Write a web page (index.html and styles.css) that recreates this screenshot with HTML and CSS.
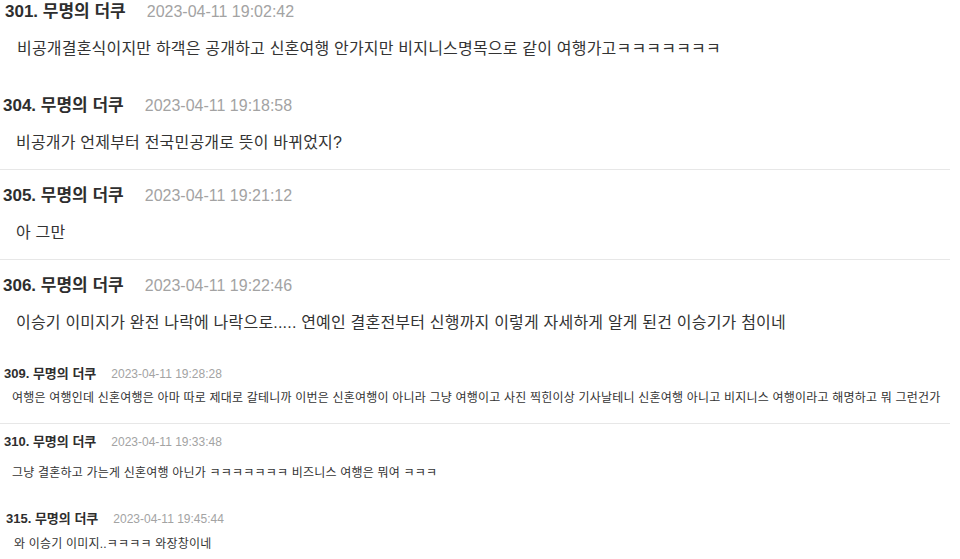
FILE: index.html
```html
<!DOCTYPE html>
<html lang="ko">
<head>
<meta charset="utf-8">
<title>댓글</title>
<link rel="stylesheet" href="styles.css">
</head>
<body>
<div class="page">
  <section class="thread thread-lg">
    <article class="cmt cmt-first">
      <div class="cmt-head"><span class="cmt-name">301. 무명의 더쿠</span><span class="cmt-date">2023-04-11 19:02:42</span></div>
      <p class="cmt-body">비공개결혼식이지만 하객은 공개하고 신혼여행 안가지만 비지니스명목으로 같이 여행가고ㅋㅋㅋㅋㅋㅋㅋ</p>
    </article>
    <article class="cmt cmt-line">
      <div class="cmt-head"><span class="cmt-name">304. 무명의 더쿠</span><span class="cmt-date">2023-04-11 19:18:58</span></div>
      <p class="cmt-body">비공개가 언제부터 전국민공개로 뜻이 바뀌었지?</p>
    </article>
    <article class="cmt cmt-line">
      <div class="cmt-head"><span class="cmt-name">305. 무명의 더쿠</span><span class="cmt-date">2023-04-11 19:21:12</span></div>
      <p class="cmt-body">아 그만</p>
    </article>
    <article class="cmt">
      <div class="cmt-head"><span class="cmt-name">306. 무명의 더쿠</span><span class="cmt-date">2023-04-11 19:22:46</span></div>
      <p class="cmt-body">이승기 이미지가 완전 나락에 나락으로..... 연예인 결혼전부터 신행까지 이렇게 자세하게 알게 된건 이승기가 첨이네</p>
    </article>
  </section>
  <section class="thread thread-sm">
    <article class="cmt cmt-first cmt-line">
      <div class="cmt-head"><span class="cmt-name">309. 무명의 더쿠</span><span class="cmt-date">2023-04-11 19:28:28</span></div>
      <p class="cmt-body">여행은 여행인데 신혼여행은 아마 따로 제대로 갈테니까 이번은 신혼여행이 아니라 그냥 여행이고 사진 찍힌이상 기사날테니 신혼여행 아니고 비지니스 여행이라고 해명하고 뭐 그런건가</p>
    </article>
    <article class="cmt cmt-loose">
      <div class="cmt-head"><span class="cmt-name">310. 무명의 더쿠</span><span class="cmt-date">2023-04-11 19:33:48</span></div>
      <p class="cmt-body">그냥 결혼하고 가는게 신혼여행 아닌가 ㅋㅋㅋㅋㅋㅋㅋ 비즈니스 여행은 뭐여 ㅋㅋㅋ</p>
    </article>
    <article class="cmt cmt-shift">
      <div class="cmt-head"><span class="cmt-name">315. 무명의 더쿠</span><span class="cmt-date">2023-04-11 19:45:44</span></div>
      <p class="cmt-body">와 이승기 이미지..ㅋㅋㅋㅋ 와장창이네</p>
    </article>
  </section>
</div>
</body>
</html>
```

FILE: styles.css
```css
* { box-sizing: border-box; }

html, body {
  margin: 0;
  padding: 0;
  background: #ffffff;
}

body {
  font-family: "Liberation Sans", "Noto Sans CJK KR", sans-serif;
  color: #333333;
  overflow: hidden;
}

.page {
  width: 950px;
  display: flex;
  flex-direction: column;
}

.thread {
  display: flex;
  flex-direction: column;
}

.cmt-head {
  display: flex;
  align-items: center;
  white-space: nowrap;
}

.cmt-name {
  font-weight: 700;
  color: #2e2e2e;
}

.cmt-date {
  color: #a3a3a3;
}

.cmt-body {
  margin: 0;
  white-space: nowrap;
  color: #333333;
}

.cmt-line {
  border-bottom: 1px solid #e7e7e7;
}

/* large comments */
.thread-lg .cmt {
  padding: 16px 0 15px;
}
.thread-lg .cmt.cmt-first {
  padding: 2px 0 20px;
}
.thread-lg .cmt-head {
  height: 20px;
  padding-left: 3px;
  gap: 21px;
  margin-bottom: 16px;
}
.thread-lg .cmt-first .cmt-head {
  padding-left: 5px;
}
.thread-lg .cmt-name {
  font-size: 17px;
  line-height: 20px;
}
.thread-lg .cmt-date {
  font-size: 16px;
  line-height: 20px;
}
.thread-lg .cmt-body {
  font-size: 16px;
  letter-spacing: 0.2px;
  line-height: 22px;
  padding-left: 16px;
}
.thread-lg .cmt-first .cmt-body {
  padding-left: 17px;
}

/* small comments */
.thread-sm .cmt {
  padding: 10px 0 16px;
}
.thread-sm .cmt.cmt-first {
  padding-top: 17px;
}
.thread-sm .cmt.cmt-loose {
  padding-bottom: 19px;
}
.thread-sm .cmt.cmt-shift {
  padding-top: 10px;
}
.thread-sm .cmt-head {
  height: 16px;
  padding-left: 4px;
  gap: 15px;
  margin-bottom: 7px;
}
.thread-sm .cmt-loose .cmt-head {
  margin-bottom: 14px;
}
.thread-sm .cmt-shift .cmt-head {
  padding-left: 6px;
  margin-bottom: 8px;
}
.thread-sm .cmt-name {
  font-size: 13px;
  line-height: 16px;
}
.thread-sm .cmt-date {
  font-size: 12px;
  line-height: 16px;
}
.thread-sm .cmt-body {
  font-size: 12px;
  letter-spacing: 0.2px;
  line-height: 18px;
  padding-left: 12px;
}
.thread-sm .cmt-shift .cmt-body {
  padding-left: 14px;
}
```
